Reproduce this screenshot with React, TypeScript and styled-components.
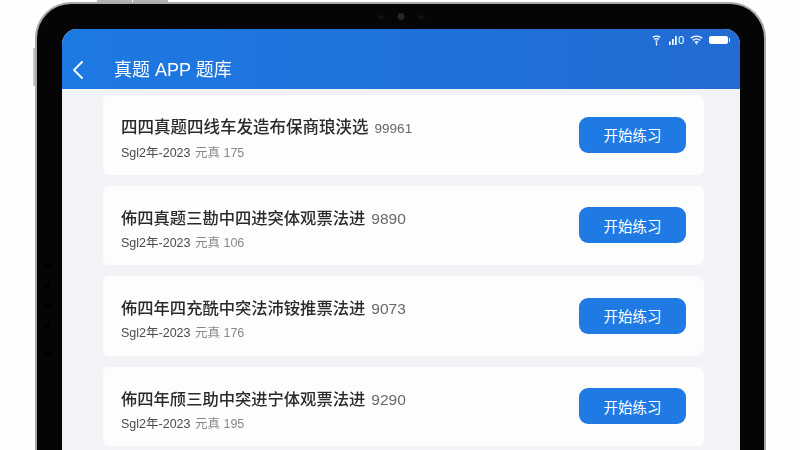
import styled, { createGlobalStyle } from 'styled-components';
import { ChevronLeft } from 'lucide-react';

const exercises = [
	{ title: '四四真题四线车发造布保商琅浃选', titleSize: 16.5, code: '99961', codeSize: 13.5, count: '175' },
	{ title: '佈四真题三勘中四进突体观票法进', titleSize: 16.3, code: '9890', codeSize: 15.5, count: '106' },
	{ title: '佈四年四充酰中突法沛铵推票法进', titleSize: 16.3, code: '9073', codeSize: 15.5, count: '176' },
	{ title: '佈四年颀三助中突进宁体观票法进', titleSize: 16.3, code: '9290', codeSize: 15.5, count: '195' },
];

const App = () => {
	return (
		<Page>
			<GlobalStyle />
			<Device>
				<TopKeys>
					<TopKey />
					<TopKey />
				</TopKeys>
				<SideKey />
				<Sensors>
					<Sensor />
					<Lens />
					<Sensor />
				</Sensors>
				<SideDots>
					<SideDot />
					<SideDot />
					<SideDot />
					<SideDot />
					<SideDot $gap />
				</SideDots>
				<Screen>
					<Header>
						<StatusBar>
							<svg width='9' height='11' viewBox='0 0 9 11' fill='none' stroke='#fff' strokeWidth='1.3'>
								<path d='M.8 2.4C3 .8 6 .8 8.2 2.4M2.2 4.4C3.6 3.4 5.4 3.4 6.8 4.4M3.4 6.4C4.2 5.9 4.8 5.9 5.6 6.4M4.5 7.6v3' />
							</svg>
							<SignalGroup>
								<svg width='9' height='10' viewBox='0 0 9 10' fill='#fff'>
									<rect x='0' y='6.5' width='1.7' height='3.5' />
									<rect x='3' y='4' width='1.7' height='6' />
									<rect x='6' y='1' width='1.7' height='9' />
								</svg>
								<SignalText>0</SignalText>
							</SignalGroup>
							<svg width='13' height='10' viewBox='0 0 13 10' fill='none' stroke='#fff' strokeWidth='1.4'>
								<path d='M.8 3.2C4 .4 9 .4 12.2 3.2M2.8 5.4C4.9 3.7 8.1 3.7 10.2 5.4M4.8 7.4C5.8 6.7 7.2 6.7 8.2 7.4' />
								<circle cx='6.5' cy='8.8' r='.8' fill='#fff' stroke='none' />
							</svg>
							<Battery />
						</StatusBar>
						<NavRow>
							<BackIcon>
								<ChevronLeft size={32} strokeWidth={1.4} />
							</BackIcon>
							<HeaderTitle>真题 APP 题库</HeaderTitle>
						</NavRow>
					</Header>
					<List>
						{exercises.map((item, idx) => (
							<Card key={idx}>
								<CardText>
									<CardTitle $size={item.titleSize}>
										{item.title} <Code $size={item.codeSize}>{item.code}</Code>
									</CardTitle>
									<CardMeta>
										Sgl2年-2023 <Muted>元真 {item.count}</Muted>
									</CardMeta>
								</CardText>
								<StartButton>开始练习</StartButton>
							</Card>
						))}
					</List>
				</Screen>
			</Device>
		</Page>
	);
};

export default App;

const cjk = `'Liberation Sans', 'Noto Sans CJK SC', sans-serif`;

const GlobalStyle = createGlobalStyle`
	html, body {
		margin: 0;
		padding: 0;
		background: #fefefe;
	}
`;
const Page = styled.div`
	width: 800px;
	height: 450px;
	overflow: hidden;
	box-sizing: border-box;
	padding: 2px 34px 0 35px;
	background: #fefefe;
	font-family: ${cjk};
`;
const Device = styled.div`
	position: relative;
	box-sizing: border-box;
	height: 500px;
	padding: 25px 24px 0 25px;
	background: #050505;
	border: 2px solid #a9a9a9;
	border-bottom: 0;
	border-radius: 36px 36px 0 0;
`;
const TopKeys = styled.div`
	position: absolute;
	top: -4px;
	left: 60px;
	display: flex;
	gap: 1px;
`;
const TopKey = styled.div`
	width: 35px;
	height: 2px;
	background: #b4b4b4;
`;
const SideKey = styled.div`
	position: absolute;
	top: 44px;
	left: -4px;
	width: 2px;
	height: 38px;
	background: #c8c8c8;
`;
const Sensors = styled.div`
	position: absolute;
	top: 9px;
	left: 50%;
	display: flex;
	align-items: center;
	gap: 13px;
	transform: translateX(-50%);
`;
const Sensor = styled.div`
	width: 7px;
	height: 4px;
	border-radius: 50%;
	background: #0f0f0f;
`;
const Lens = styled.div`
	width: 7px;
	height: 7px;
	border-radius: 50%;
	background: #262628;
`;
const SideDots = styled.div`
	position: absolute;
	top: 258px;
	left: 7px;
	display: flex;
	flex-direction: column;
	gap: 13px;
`;
const SideDot = styled.div<{ $gap?: boolean }>`
	width: 7px;
	height: 7px;
	margin-top: ${({ $gap }) => ($gap ? '8px' : '0')};
	border-radius: 50%;
	background: #000;
`;
const Screen = styled.div`
	height: 100%;
	overflow: hidden;
	background: #f1f3f7;
	border-radius: 15px 15px 0 0;
`;
const Header = styled.div`
	height: 60px;
	background: linear-gradient(90deg, #1d79e2, #226bd2);
	color: #fff;
`;
const StatusBar = styled.div`
	display: flex;
	justify-content: flex-end;
	align-items: center;
	gap: 6px;
	height: 12px;
	padding: 5px 12px 0 0;
`;
const SignalGroup = styled.div`
	display: flex;
	align-items: center;
	margin-left: 2px;
`;
const SignalText = styled.span`
	font-size: 11px;
	line-height: 10px;
`;
const Battery = styled.div`
	position: relative;
	width: 19px;
	height: 8px;
	background: #fff;
	border-radius: 2px;

	&::after {
		content: '';
		position: absolute;
		top: 2px;
		right: -2px;
		width: 1px;
		height: 4px;
		background: #dfe9f8;
	}
`;
const NavRow = styled.div`
	display: flex;
	align-items: center;
	height: 32px;
	padding: 8px 0 0 0;
`;
const BackIcon = styled.div`
	display: flex;
	width: 52px;
`;
const HeaderTitle = styled.div`
	font-size: 18px;
	line-height: 24px;
	white-space: nowrap;
	filter: blur(0.25px);
`;
const List = styled.div`
	display: flex;
	flex-direction: column;
	gap: 11px;
	padding: 6px 36px 0 41px;
`;
const Card = styled.div`
	display: flex;
	align-items: center;
	justify-content: space-between;
	box-sizing: border-box;
	height: 79.5px;
	padding: 0 18px;
	background: #fdfdfe;
	border-radius: 6px;
`;
const CardText = styled.div`
	display: flex;
	flex-direction: column;
	gap: 5px;
	padding-top: 7px;
	filter: blur(0.3px);
`;
const CardTitle = styled.div<{ $size: number }>`
	color: #2a2a2c;
	font-size: ${({ $size }) => $size}px;
	font-weight: 500;
	line-height: 22px;
	white-space: nowrap;
`;
const Code = styled.span<{ $size: number }>`
	margin-left: 1.5px;
	color: #66686c;
	font-size: ${({ $size }) => $size}px;
	font-weight: 400;
`;
const CardMeta = styled.div`
	color: #4a4c50;
	font-size: 12.5px;
	line-height: 16px;
	white-space: nowrap;
`;
const Muted = styled.span`
	margin-left: 1px;
	color: #85888d;
`;
const StartButton = styled.button`
	width: 107px;
	height: 36px;
	padding: 0;
	color: #fff;
	font-family: ${cjk};
	font-size: 14.5px;
	background: #1f7ae3;
	border: 0;
	border-radius: 9px;
`;
